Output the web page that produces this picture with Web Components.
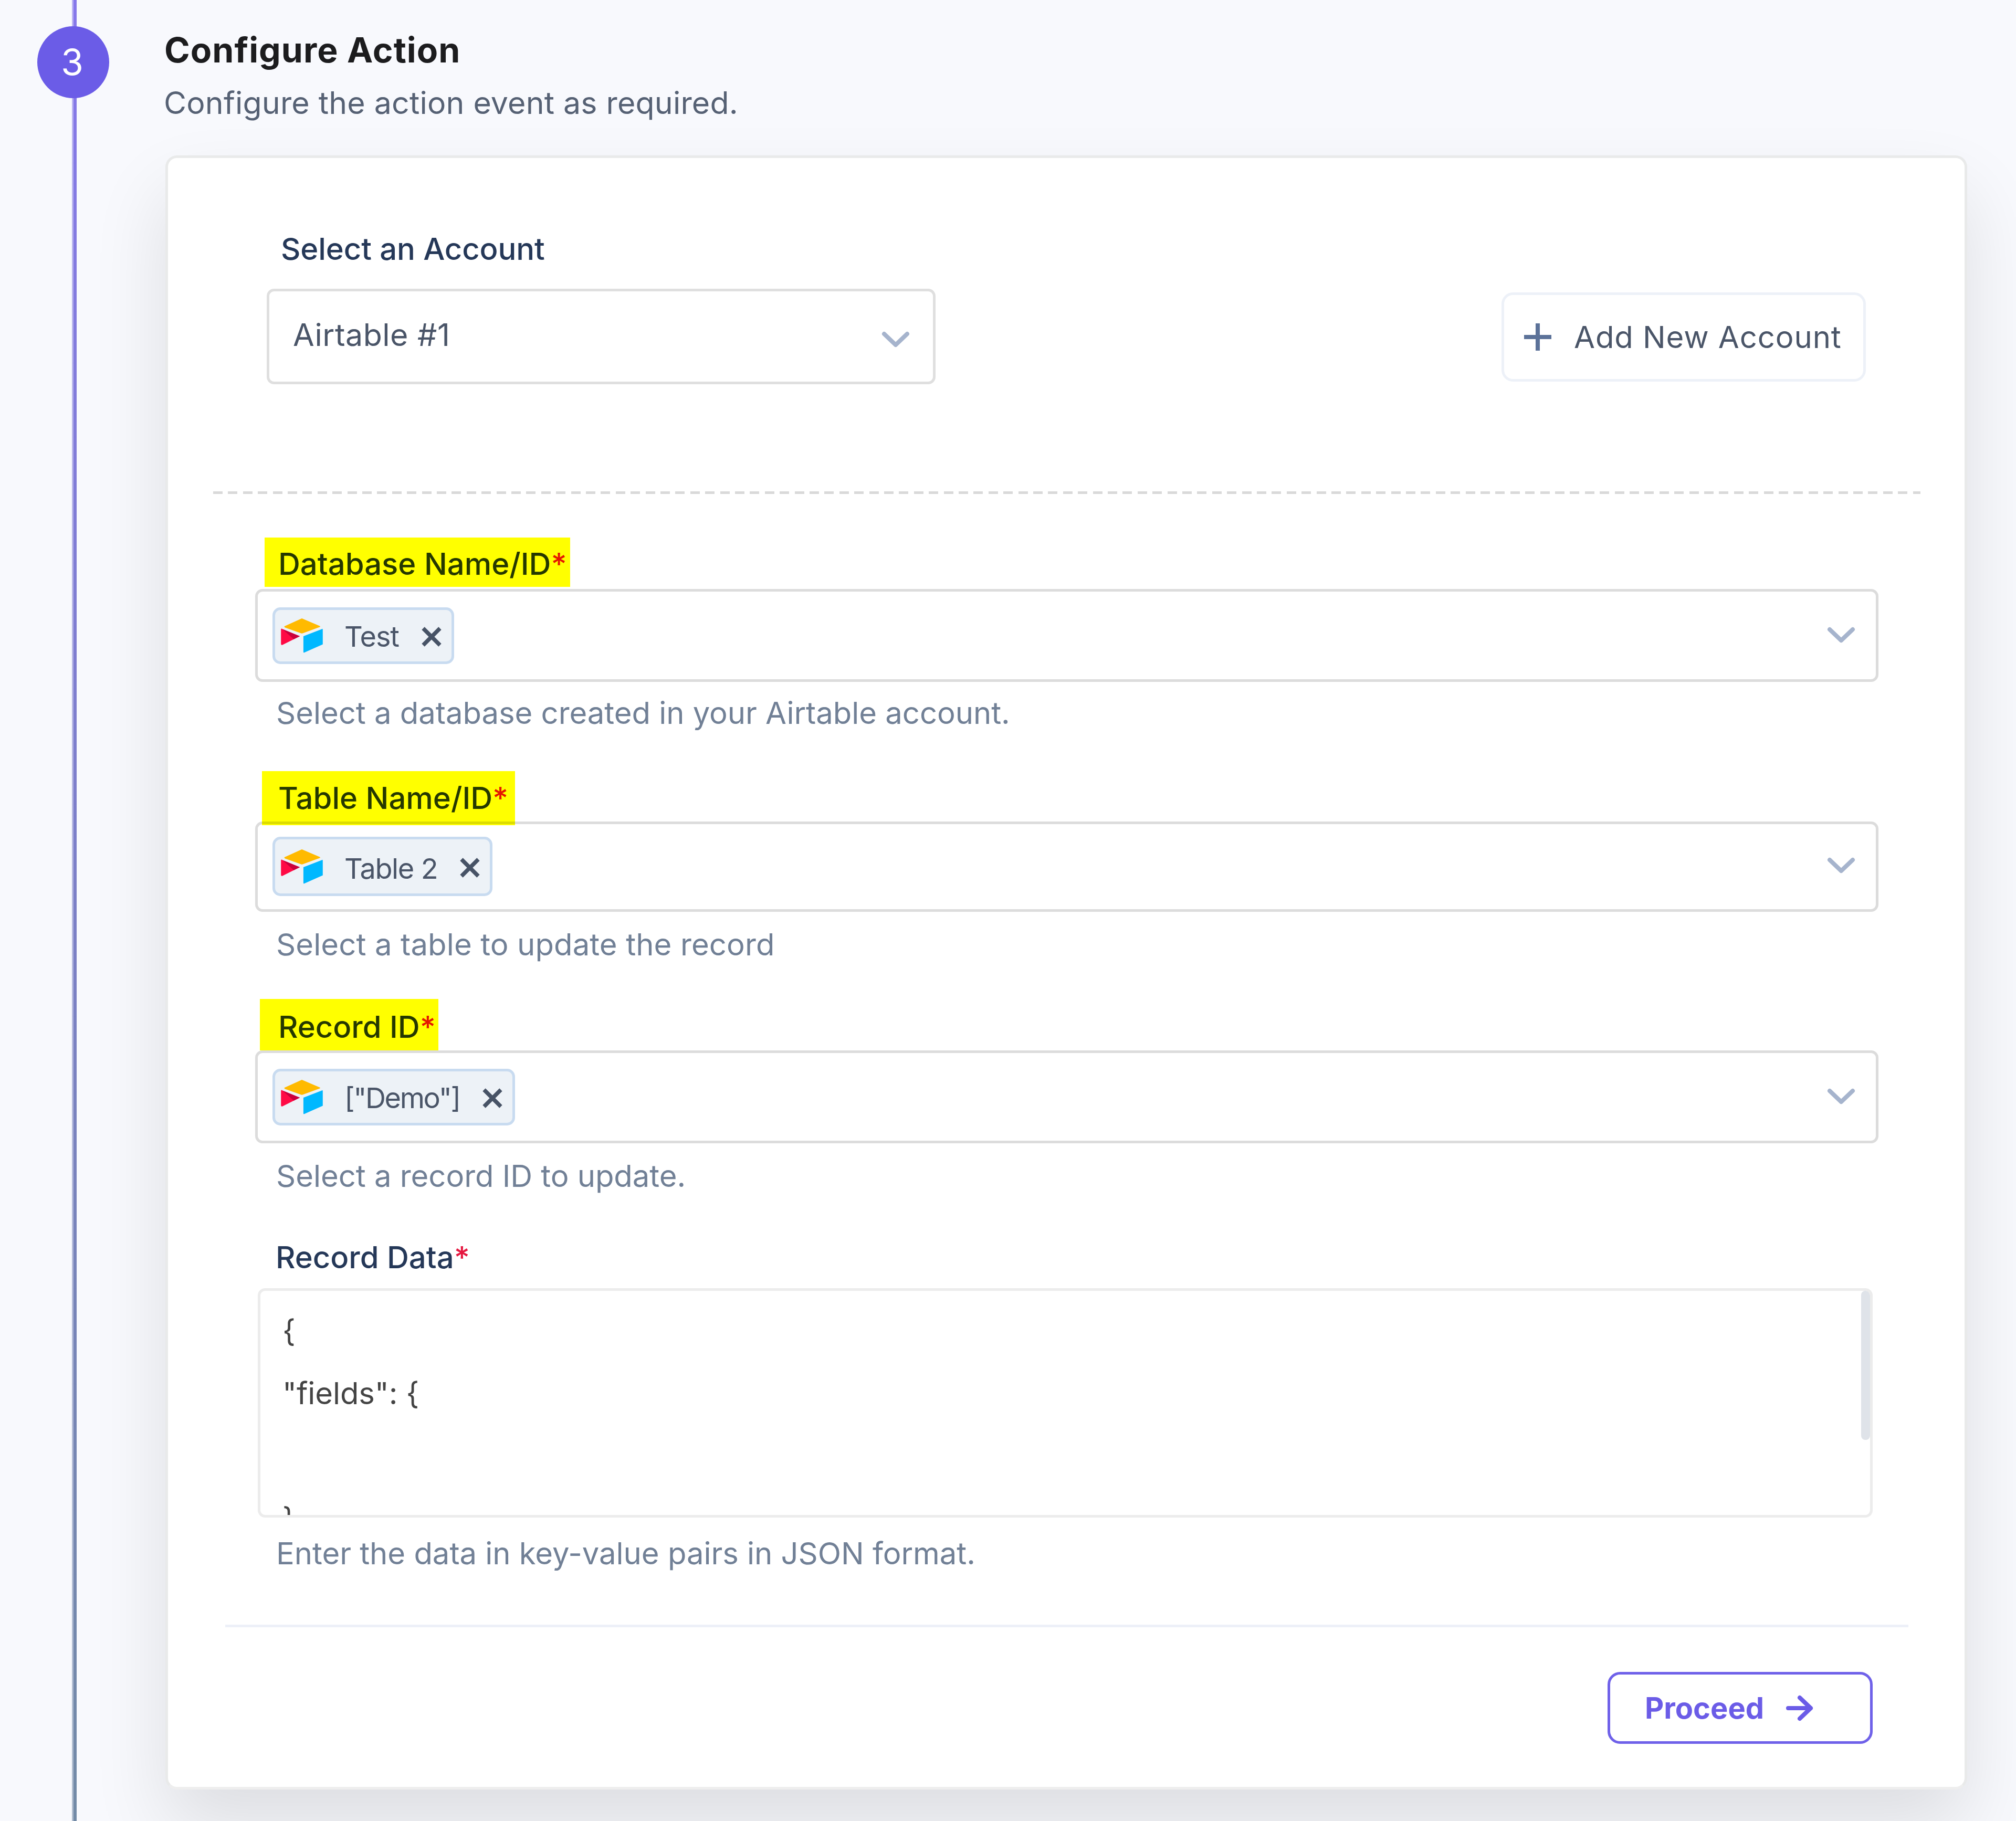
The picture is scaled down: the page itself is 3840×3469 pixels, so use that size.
<!DOCTYPE html>
<html lang="en">
<head>
<meta charset="utf-8">
<title>Configure Action</title>
<style>
    body {
        margin: 0;
        background: #f8f9fd;
        font-family: Inter, "Liberation Sans", sans-serif;
        font-size: 58px;
        line-height: 72px;
        color: #4a5568;
        overflow: hidden;
    }
</style>
</head>
<body>

<workflow-step number="3">
    <span slot="title">Configure Action</span>
    <span slot="subtitle">Configure the action event as required.</span>

    <step-card>
        <account-picker label="Select an Account" value="Airtable #1" action="Add New Account"></account-picker>
        <pick-field label="Database Name/ID" value="Test" hint="Select a database created in your Airtable account."
            style="--top: 83px; --mark-x: 504px; --mark-w: 582px; --mark-h: 94px; --pad: 14px; --gap: 4px; --chip-y: 30px; --chip-h: 108px; --box-h: 177px; --hint-y: 23px"></pick-field>
        <pick-field label="Table Name/ID" value="Table 2" hint="Select a table to update the record"
            style="--top: 75px; --mark-x: 499px; --mark-w: 482px; --mark-h: 103px; --pad: 15px; --gap: -7px; --chip-y: 24px; --chip-h: 113px; --chip-text-y: 9px; --chip-spacing: -1.4px; --arrow-y: 62px; --box-h: 172px; --hint-y: 26px; --hint-spacing: 0.1px"></pick-field>
        <pick-field label="Record ID" value='["Demo"]' hint="Select a record ID to update."
            style="--top: 68px; --mark-x: 495px; --mark-w: 340px; --mark-h: 98px; --pad: 17px; --gap: 0px; --chip-y: 30px; --chip-h: 108px; --chip-spacing: -2.4px; --box-h: 177px; --hint-y: 26px"></pick-field>
        <data-field label="Record Data" hint="Enter the data in key-value pairs in JSON format.">{
"fields": {

}</data-field>
        <step-footer>Proceed</step-footer>
    </step-card>
</workflow-step>

<script>
    const chevron = `
        <svg class="chevron" width="54" height="34" viewBox="0 0 54 34" fill="none">
            <path d="M5 6 L27 27 L49 6" stroke="#a6b4cd" stroke-width="8" stroke-linecap="round" stroke-linejoin="round"/>
        </svg>`;

    const logo = `
        <svg class="logo" width="82" height="66" viewBox="0 0 82 68">
            <path d="M41 0 L76 15 Q78 16 76 17 L43 29 Q41 30 39 29 L8 18 Q5 16 8 15 Z" fill="#ffba00"/>
            <path d="M44 35 L80 21 Q82 20 82 22 L82 51 L46 67 Q44 68 44 66 Z" fill="#00b8ff"/>
            <path d="M0 22 Q0 19 3 21 L37 35 L3 52 Q0 53 0 50 Z" fill="#ff0a45"/>
            <path d="M3 21 L37 35 L25 41 Z" fill="#c9003c"/>
        </svg>`;

    class WorkflowStep extends HTMLElement {
        constructor() {
            super();
            this.attachShadow({ mode: 'open' });
        }

        connectedCallback() {
            this.shadowRoot.innerHTML = `
                <style>
                    :host {
                        display: flex;
                        width: 3840px;
                        height: 3469px;
                        overflow: hidden;
                    }
                    .rail {
                        flex: none;
                        width: 315px;
                        background:
                            linear-gradient(rgba(248, 249, 253, 0.45), rgba(248, 249, 253, 0.45)) 137px 0 / 3px 100% no-repeat,
                            linear-gradient(#8678ea, #7b7fc6 50%, #728aa6) 137px 0 / 9px 100% no-repeat;
                    }
                    .number {
                        box-sizing: border-box;
                        width: 137px;
                        height: 137px;
                        margin: 50px 0 0 71px;
                        padding-right: 4px;
                        border-radius: 50%;
                        background: #6b5ce7;
                        color: #fff;
                        font-size: 69px;
                        line-height: 137px;
                        text-align: center;
                    }
                    .main {
                        flex: none;
                        width: 3432px;
                    }
                    h2 {
                        margin: 59px 0 0 -2px;
                        font-size: 66px;
                        line-height: 72px;
                        font-weight: 700;
                        letter-spacing: 1px;
                        color: #1c1c1e;
                    }
                    p {
                        margin: 29px 0 64px -3px;
                        font-size: 59px;
                        letter-spacing: 0.2px;
                        color: #566174;
                    }
                </style>
                <div class="rail"><div class="number">${this.getAttribute('number')}</div></div>
                <div class="main">
                    <h2><slot name="title"></slot></h2>
                    <p><slot name="subtitle"></slot></p>
                    <slot></slot>
                </div>
            `;
        }
    }

    class StepCard extends HTMLElement {
        constructor() {
            super();
            this.attachShadow({ mode: 'open' });
            this.shadowRoot.innerHTML = `
                <style>
                    :host {
                        display: block;
                        box-sizing: border-box;
                        height: 3113px;
                        border: 5px solid #e9eaea;
                        border-bottom-color: #eeeeee;
                        border-radius: 22px;
                        background: #fff;
                        box-shadow: 0 72px 144px rgba(0, 0, 0, 0.11);
                    }
                </style>
                <slot></slot>
            `;
        }
    }

    class AccountPicker extends HTMLElement {
        constructor() {
            super();
            this.attachShadow({ mode: 'open' });
        }

        connectedCallback() {
            this.shadowRoot.innerHTML = `
                <style>
                    :host {
                        display: block;
                        margin: 0 84px 0 86px;
                        padding-top: 137px;
                        height: 503px;
                        background: repeating-linear-gradient(90deg, #d9d9d9 0 18px, transparent 18px 28.4px) 0 100% / 100% 5px no-repeat;
                    }
                    label {
                        display: block;
                        margin-left: 129px;
                        font-weight: 500;
                        letter-spacing: -0.1px;
                        color: #253858;
                    }
                    .row {
                        display: flex;
                        justify-content: space-between;
                        margin: 40px 104px 0 102px;
                    }
                    .select {
                        display: flex;
                        justify-content: space-between;
                        box-sizing: border-box;
                        width: 1274px;
                        height: 182px;
                        padding: 47px 44px 0 45px;
                        border: 5px solid #dfdfdf;
                        border-radius: 14px;
                        font-size: 59px;
                        letter-spacing: 0.5px;
                    }
                    .chevron {
                        margin-top: 28px;
                    }
                    button {
                        display: flex;
                        align-items: center;
                        box-sizing: border-box;
                        width: 694px;
                        height: 170px;
                        margin-top: 7px;
                        padding: 0 0 0 38px;
                        gap: 43px;
                        border: 5px solid #edf1f8;
                        border-radius: 22px;
                        background: #fff;
                        font: inherit;
                        color: #4a5568;
                        letter-spacing: 0.9px;
                        white-space: nowrap;
                    }
                </style>
                <label>${this.getAttribute('label')}</label>
                <div class="row">
                    <div class="select"><span>${this.getAttribute('value')}</span>${chevron}</div>
                    <button>
                        <svg width="52" height="52" viewBox="0 0 52 52"><path d="M26 0V52M0 26H52" stroke="#5c7299" stroke-width="8"/></svg>
                        <span>${this.getAttribute('action')}</span>
                    </button>
                </div>
            `;
        }
    }

    class PickField extends HTMLElement {
        constructor() {
            super();
            this.attachShadow({ mode: 'open' });
        }

        connectedCallback() {
            this.shadowRoot.innerHTML = `
                <style>
                    :host {
                        display: block;
                        margin-left: -320px;
                        padding-top: var(--top);
                    }
                    /* highlighter strip, the select border shows through it */
                    label {
                        display: block;
                        box-sizing: border-box;
                        width: var(--mark-w);
                        height: var(--mark-h);
                        margin-left: var(--mark-x);
                        padding: var(--pad) 0 0 calc(530px - var(--mark-x));
                        background: #ff0;
                        mix-blend-mode: multiply;
                        font-weight: 500;
                        color: #253800;
                        white-space: nowrap;
                    }
                    .star {
                        color: #e51700;
                    }
                    .box {
                        display: flex;
                        align-items: flex-start;
                        justify-content: space-between;
                        box-sizing: border-box;
                        width: 3092px;
                        height: var(--box-h);
                        margin: var(--gap) 0 0 486px;
                        padding: 0 39px 0 28px;
                        border: 5px solid #dcdcdc;
                        border-radius: 14px;
                    }
                    .chip {
                        display: flex;
                        align-items: center;
                        box-sizing: border-box;
                        height: var(--chip-h);
                        margin-top: var(--chip-y);
                        padding: 0 18px 0 10px;
                        border: 5px solid #c8dbf0;
                        border-radius: 15px;
                        background: #edf2f7;
                        font-size: 54px;
                        letter-spacing: var(--chip-spacing, -1.1px);
                    }
                    .chip span {
                        margin: 0 42px 0 40px;
                        padding-top: var(--chip-text-y, 3px);
                    }
                    .cross {
                        margin-top: 4px;
                    }
                    .chevron {
                        margin-top: var(--arrow-y, 66px);
                    }
                    p {
                        margin: var(--hint-y) 0 0 526px;
                        letter-spacing: var(--hint-spacing, -0.05px);
                        color: #718096;
                    }
                </style>
                <label>${this.getAttribute('label')}<span class="star">*</span></label>
                <div class="box">
                    <div class="chip">
                        ${logo}
                        <span>${this.getAttribute('value')}</span>
                        <svg class="cross" width="40" height="38" viewBox="0 0 40 38"><path d="M4 3L36 35M36 3L4 35" stroke="#475366" stroke-width="7.5"/></svg>
                    </div>
                    ${chevron}
                </div>
                <p>${this.getAttribute('hint')}</p>
            `;
        }
    }

    class DataField extends HTMLElement {
        constructor() {
            super();
            this.attachShadow({ mode: 'open' });
        }

        connectedCallback() {
            this.shadowRoot.innerHTML = `
                <style>
                    :host {
                        display: block;
                        padding: 83px 0 0 171px;
                    }
                    label {
                        display: block;
                        margin-left: 34px;
                        font-weight: 500;
                        color: #253858;
                    }
                    .star {
                        color: #e5173f;
                    }
                    .area {
                        display: flex;
                        justify-content: space-between;
                        box-sizing: border-box;
                        width: 3076px;
                        height: 437px;
                        margin-top: 23px;
                        border: 5px solid #ececec;
                        border-radius: 14px;
                        overflow: hidden;
                    }
                    pre {
                        margin: 17px 0 0 42px;
                        font: inherit;
                        line-height: 119.3px;
                        letter-spacing: -0.1px;
                        color: #444;
                    }
                    .thumb {
                        width: 17px;
                        height: 284px;
                        border-radius: 8px;
                        background: #dfe3e9;
                    }
                    p {
                        margin: 32px 0 0 35px;
                        letter-spacing: -0.05px;
                        color: #718096;
                    }
                </style>
                <label>${this.getAttribute('label')}<span class="star">*</span></label>
                <div class="area"><pre><slot></slot></pre><div class="thumb"></div></div>
                <p>${this.getAttribute('hint')}</p>
            `;
        }
    }

    class StepFooter extends HTMLElement {
        constructor() {
            super();
            this.attachShadow({ mode: 'open' });
            this.shadowRoot.innerHTML = `
                <style>
                    :host {
                        display: flex;
                        justify-content: flex-end;
                        margin: 100px 107px 0 109px;
                        padding: 85px 68px 0 0;
                        border-top: 5px solid #edf0f8;
                    }
                    button {
                        display: flex;
                        align-items: center;
                        box-sizing: border-box;
                        width: 505px;
                        height: 137px;
                        padding: 0 0 0 66px;
                        gap: 42px;
                        border: 5px solid #6f61e9;
                        border-radius: 24px;
                        background: #fff;
                        font: inherit;
                        font-size: 56px;
                        font-weight: 700;
                        color: #6b5ce7;
                    }
                </style>
                <button>
                    <span><slot></slot></span>
                    <svg width="52" height="50" viewBox="0 0 52 50" fill="none" stroke="#6b5ce7" stroke-width="8" stroke-linecap="round" stroke-linejoin="round">
                        <path d="M4 25H47M26 5L47 25L26 45"/>
                    </svg>
                </button>
            `;
        }
    }

    customElements.define('workflow-step', WorkflowStep);
    customElements.define('step-card', StepCard);
    customElements.define('account-picker', AccountPicker);
    customElements.define('pick-field', PickField);
    customElements.define('data-field', DataField);
    customElements.define('step-footer', StepFooter);
</script>
</body>
</html>
